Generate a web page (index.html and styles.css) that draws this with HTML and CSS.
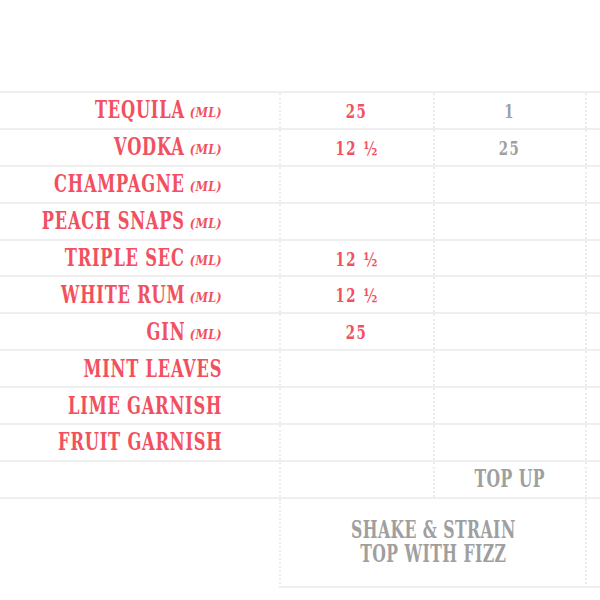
FILE: index.html
```html
<!DOCTYPE html>
<html>
<head>
<meta charset="utf-8">
<link rel="stylesheet" href="styles.css">
</head>
<body>
<div class="sheet">
  <div class="row"><div class="label"><span class="txt">TEQUILA</span><i class="unit">(ML)</i></div><div class="cell red"><span class="num">25</span></div><div class="cell grey"><span class="num">1</span></div><div class="cell"></div></div>
  <div class="row"><div class="label"><span class="txt">VODKA</span><i class="unit">(ML)</i></div><div class="cell red"><span class="num">12 ½</span></div><div class="cell grey"><span class="num">25</span></div><div class="cell"></div></div>
  <div class="row"><div class="label"><span class="txt">CHAMPAGNE</span><i class="unit">(ML)</i></div><div class="cell"></div><div class="cell"></div><div class="cell"></div></div>
  <div class="row"><div class="label"><span class="txt">PEACH SNAPS</span><i class="unit">(ML)</i></div><div class="cell"></div><div class="cell"></div><div class="cell"></div></div>
  <div class="row"><div class="label"><span class="txt">TRIPLE SEC</span><i class="unit">(ML)</i></div><div class="cell red"><span class="num">12 ½</span></div><div class="cell"></div><div class="cell"></div></div>
  <div class="row"><div class="label"><span class="txt">WHITE RUM</span><i class="unit">(ML)</i></div><div class="cell red"><span class="num">12 ½</span></div><div class="cell"></div><div class="cell"></div></div>
  <div class="row"><div class="label"><span class="txt">GIN</span><i class="unit">(ML)</i></div><div class="cell red"><span class="num">25</span></div><div class="cell"></div><div class="cell"></div></div>
  <div class="row"><div class="label"><span class="txt">MINT LEAVES</span></div><div class="cell"></div><div class="cell"></div><div class="cell"></div></div>
  <div class="row"><div class="label"><span class="txt">LIME GARNISH</span></div><div class="cell"></div><div class="cell"></div><div class="cell"></div></div>
  <div class="row"><div class="label"><span class="txt">FRUIT GARNISH</span></div><div class="cell"></div><div class="cell"></div><div class="cell"></div></div>
  <div class="row"><div class="label"></div><div class="cell"></div><div class="cell grey"><span class="word">TOP UP</span></div><div class="cell"></div></div>
  <div class="row row-last"><div class="label"></div><div class="cell span grey"><span class="word">SHAKE &amp; STRAIN<br>TOP WITH FIZZ</span></div><div class="cell end"></div></div>
</div>
</body>
</html>
```
FILE: styles.css
```css
html, body {
  margin: 0;
  padding: 0;
  background: #ffffff;
  overflow: hidden;
}

.sheet {
  padding-top: 91px;
  width: 600px;
  font-family: "DejaVu Serif Condensed", "DejaVu Serif", serif;
  font-stretch: condensed;
  font-weight: bold;
}

.row {
  display: grid;
  grid-template-columns: 279px 154px 152px 1fr;
  height: 36.9px;
  box-sizing: border-box;
  border-top: 2px solid #efefef;
}

.label {
  display: flex;
  align-items: center;
  justify-content: flex-end;
  padding-right: 57px;
  color: #f2505f;
  white-space: nowrap;
}

.txt {
  display: inline-block;
  font-size: 23.5px;
  letter-spacing: 1px;
  transform: scaleX(0.77);
  transform-origin: 100% 50%;
}

.unit {
  font-size: 12.5px;
  font-style: italic;
  letter-spacing: 0.3px;
  margin-left: 5px;
  padding-top: 5px;
}

.cell {
  display: flex;
  align-items: center;
  justify-content: center;
  text-align: center;
  border-left: 2px dotted #ececec;
}

.num {
  display: inline-block;
  font-size: 18.5px;
  letter-spacing: 2px;
  padding-top: 2px;
  transform: scaleX(0.8);
}

.word {
  display: inline-block;
  font-size: 23.5px;
  letter-spacing: 0.6px;
  line-height: 24px;
  transform: scaleX(0.74);
}

.red { color: #f2505f; }
.grey { color: #9f9f9f; }

.row-last {
  height: auto;
}

.row-last .span {
  grid-column: 2 / 4;
  height: 87px;
  border-bottom: 2px solid #efefef;
}

.row-last .end {
  border-bottom: 2px solid #efefef;
}
```
